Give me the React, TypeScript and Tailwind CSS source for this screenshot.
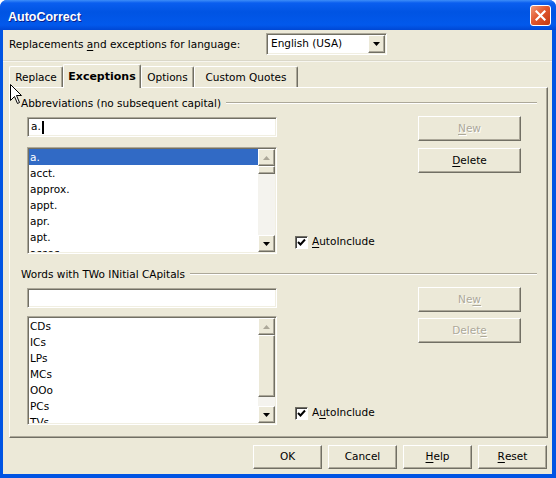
import React from "react";

const raised =
  "border border-t-white border-l-white border-b-[#716F64] border-r-[#716F64] shadow-[inset_-1px_-1px_0_#ACA899]";
const sunken =
  "border border-t-[#ACA899] border-l-[#ACA899] border-b-white border-r-white shadow-[inset_1px_1px_0_#716F64,inset_-1px_-1px_0_#F1EFE2]";

function U({ children }: { children: React.ReactNode }) {
  return <span className="underline underline-offset-2">{children}</span>;
}

function Button({
  children,
  disabled,
  className = "",
}: {
  children: React.ReactNode;
  disabled?: boolean;
  className?: string;
}) {
  return (
    <div
      className={`flex items-center justify-center bg-[#ECE9D8] ${raised} ${
        disabled
          ? "text-[#ACA899] [text-shadow:1px_1px_0_#fff]"
          : "text-black"
      } ${className}`}
    >
      {children}
    </div>
  );
}

function Arrow({ up, disabled }: { up?: boolean; disabled?: boolean }) {
  return (
    <svg width="7" height="4" viewBox="0 0 7 4">
      <path
        d={up ? "M0 4 L3.5 0 L7 4 Z" : "M0 0 L7 0 L3.5 4 Z"}
        fill={disabled ? "#ACA899" : "#000"}
      />
    </svg>
  );
}

function ScrollBar({ thumb }: { thumb: number }) {
  return (
    <div className="flex w-[17px] shrink-0 flex-col bg-[#F4F3EE]">
      <div className={`flex h-[17px] items-center justify-center bg-[#ECE9D8] ${raised}`}>
        <Arrow up disabled />
      </div>
      <div
        className={`bg-[#ECE9D8] ${raised}`}
        style={{ height: thumb }}
      />
      <div className="flex-1" />
      <div className={`flex h-[17px] items-center justify-center bg-[#ECE9D8] ${raised}`}>
        <Arrow />
      </div>
    </div>
  );
}

function ListBox({
  items,
  selected,
  height,
  thumb,
}: {
  items: string[];
  selected?: number;
  height: string;
  thumb: number;
}) {
  return (
    <div className={`flex bg-white p-[1px] ${sunken} ${height}`}>
      <div className="flex min-w-0 flex-1 flex-col overflow-hidden">
        {items.map((it, i) => (
          <div
            key={it}
            className={`h-[16px] shrink-0 pl-[1px] leading-[16px] ${
              i === selected ? "bg-[#316AC5] text-white" : "text-black"
            }`}
          >
            {it}
          </div>
        ))}
      </div>
      <ScrollBar thumb={thumb} />
    </div>
  );
}

function CheckBox({ label }: { label: React.ReactNode }) {
  return (
    <div className="flex items-center">
      <div className="flex h-[13px] w-[13px] items-center justify-center border border-t-[#716F64] border-l-[#716F64] border-b-white border-r-white bg-white shadow-[inset_1px_1px_0_#404040]">
        <svg width="9" height="9" viewBox="0 0 9 9">
          <path d="M1 4 L3.5 6.5 L8 1.5" stroke="#000" strokeWidth="2" fill="none" />
        </svg>
      </div>
      <span className="ml-[4px]">{label}</span>
    </div>
  );
}

function GroupTitle({ children }: { children: React.ReactNode }) {
  return (
    <div className="flex h-[14px] items-center pl-[11px] pr-[10px]">
      <span className="leading-[14px]">{children}</span>
      <div className="ml-[5px] h-[2px] flex-1 border-t border-b border-t-[#ACA899] border-b-white" />
    </div>
  );
}

function Tab({
  children,
  active,
  width,
}: {
  children: React.ReactNode;
  active?: boolean;
  width: string;
}) {
  return (
    <div
      className={`flex items-center justify-center rounded-t-[2px] border-t border-l border-r border-t-white border-l-white border-r-[#716F64] bg-[#ECE9D8] shadow-[inset_-1px_0_0_#ACA899] ${width} ${
        active
          ? "relative z-10 -mb-[1px] h-[24px] pt-[2px] font-bold text-[11px]"
          : "h-[21px] pt-[2px]"
      }`}
    >
      {children}
    </div>
  );
}

export default function App() {
  return (
    <div className="relative flex h-[478px] w-[556px] flex-col overflow-hidden rounded-t-[7px] bg-[#0054E3] font-['DejaVu_Sans',sans-serif] text-[10.5px] text-black">
      {/* title bar */}
      <div className="flex h-[30px] shrink-0 items-center justify-between bg-[linear-gradient(to_bottom,#3D8DF8_0px,#0A5EEF_3px,#0054E3_12px,#0259EC_25px,#0047D4_30px)] pl-[8px] pr-[5px]">
        <span className="pt-[4px] font-['Liberation_Sans',sans-serif] text-[12.5px] font-bold text-white [text-shadow:1px_1px_0_#0A1E8C]">
          AutoCorrect
        </span>
        <div className="flex h-[21px] w-[21px] items-center justify-center rounded-[3px] border border-white bg-[linear-gradient(135deg,#F09A78_0%,#E2582E_45%,#C2380F_100%)]">
          <svg width="11" height="11" viewBox="0 0 11 11">
            <path d="M1.5 1.5 L9.5 9.5 M9.5 1.5 L1.5 9.5" stroke="#fff" strokeWidth="2.2" strokeLinecap="square" />
          </svg>
        </div>
      </div>

      {/* dialog body */}
      <div className="ml-[3px] mr-[4px] flex h-[444px] flex-col bg-[#ECE9D8]">
        <div className="mt-[3px] flex h-[22px] items-center">
          <span className="w-[263px] pl-[6px] pt-[1px]">
            Replacements <U>a</U>nd exceptions for language:
          </span>
          <div className={`flex h-[22px] w-[121px] items-center bg-white p-[1px] ${sunken}`}>
            <span className="flex-1 pl-[3px]">English (USA)</span>
            <div className={`flex h-[18px] w-[17px] items-center justify-center bg-[#ECE9D8] ${raised}`}>
              <Arrow />
            </div>
          </div>
        </div>

        <div className="mt-[5px] h-[2px] border-t border-b border-t-[#DAD7C8] border-b-[#F7F6F0]" />

        {/* tabs */}
        <div className="mt-[2px] flex h-[23px] items-end pl-[6px]">
          <Tab width="w-[54px]">Replace</Tab>
          <Tab width="w-[78px]" active>
            Exceptions
          </Tab>
          <Tab width="w-[53px]">Options</Tab>
          <Tab width="w-[104px]">Custom Quotes</Tab>
        </div>

        <div className="ml-[6px] mr-[4px] flex h-[351px] flex-col border border-t-white border-l-white border-b-[#716F64] border-r-[#716F64] shadow-[inset_-1px_-1px_0_#ACA899]">
          <div className="mt-[8px]">
            <GroupTitle>Abbreviations (no subsequent capital)</GroupTitle>
          </div>
          <div className="mt-[6px] flex">
            <div className="ml-[17px] flex w-[250px] flex-col">
              <div className={`mt-[1px] flex h-[20px] items-center bg-white pl-[3px] ${sunken}`}>
                a.<span className="ml-[1px] h-[13px] w-[2px] bg-black" />
              </div>
              <div className="mt-[10px]">
                <ListBox
                  height="h-[107px]"
                  thumb={8}
                  selected={0}
                  items={["a.", "acct.", "approx.", "appt.", "apr.", "apt.", "assoc."]}
                />
              </div>
            </div>
            <div className="ml-[18px] mb-[4px] self-end">
              <CheckBox label={<><U>A</U>utoInclude</>} />
            </div>
            <div className="ml-auto mr-[26px] flex w-[103px] flex-col gap-[7px]">
              <Button disabled className="h-[25px]">
                <U>N</U>ew
              </Button>
              <Button className="h-[25px]">
                <U>D</U>elete
              </Button>
            </div>
          </div>

          <div className="mt-[13px]">
            <GroupTitle>Words with TWo INitial CApitals</GroupTitle>
          </div>
          <div className="mt-[6px] flex">
            <div className="ml-[17px] flex w-[250px] flex-col">
              <div className={`mt-[1px] h-[20px] bg-white ${sunken}`} />
              <div className="mt-[8px]">
                <ListBox
                  height="h-[109px]"
                  thumb={62}
                  items={["CDs", "ICs", "LPs", "MCs", "OOo", "PCs", "TVs"]}
                />
              </div>
            </div>
            <div className="ml-[18px] mb-[4px] self-end">
              <CheckBox label={<>A<U>u</U>toInclude</>} />
            </div>
            <div className="ml-auto mr-[26px] flex w-[103px] flex-col gap-[6px]">
              <Button disabled className="h-[25px]">
                Ne<U>w</U>
              </Button>
              <Button disabled className="h-[25px]">
                Delet<U>e</U>
              </Button>
            </div>
          </div>
        </div>

        {/* footer buttons */}
        <div className="mt-[7px] flex justify-end gap-[6px] pr-[5px]">
          <Button className="h-[24px] w-[69px]">OK</Button>
          <Button className="h-[24px] w-[69px]">Cancel</Button>
          <Button className="h-[24px] w-[69px]">
            <U>H</U>elp
          </Button>
          <Button className="h-[24px] w-[69px]">
            <U>R</U>eset
          </Button>
        </div>
      </div>

      {/* mouse pointer */}
      <svg className="absolute left-[10px] top-[84px]" width="13" height="21" viewBox="0 0 13 21">
        <path
          d="M0.5 0.5 L0.5 16.5 L4.5 12.5 L7.5 19.5 L9.5 18.5 L6.5 11.5 L11.5 11.5 Z"
          fill="#fff"
          stroke="#000"
          strokeWidth="1"
        />
      </svg>
    </div>
  );
}
